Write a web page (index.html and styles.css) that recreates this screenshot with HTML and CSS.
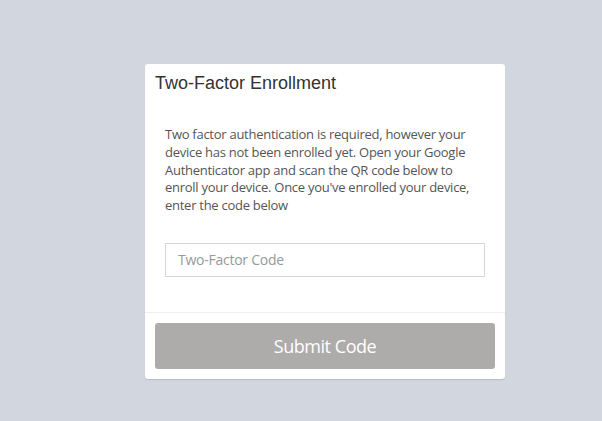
FILE: index.html
```html
<!DOCTYPE html>
<html lang="en">
<head>
<meta charset="utf-8">
<title>Two-Factor Enrollment</title>
<link rel="stylesheet" href="styles.css">
</head>
<body>
<div class="card">
  <div class="card-header">
    <h3 class="card-title">Two-Factor Enrollment</h3>
  </div>
  <div class="card-body">
    <p class="intro">Two factor authentication is required, however your device has not been enrolled yet. Open your Google Authenticator app and scan the QR code below to enroll your device. Once you've enrolled your device, enter the code below</p>
    <input class="code-input" type="text" placeholder="Two-Factor Code">
  </div>
  <div class="card-footer">
    <button class="submit-btn" type="button">Submit Code</button>
  </div>
</div>
</body>
</html>
```
FILE: styles.css
```css
html, body {
  margin: 0;
  padding: 0;
}
body {
  background: #d2d6de;
  min-height: 421px;
  padding: 64px 0 0 145px;
  box-sizing: border-box;
  font-family: "Open Sans", "Noto Sans", sans-serif;
}
.card {
  width: 360px;
  background: #fff;
  border-radius: 3px;
  box-shadow: 0 1px 1px rgba(0, 0, 0, 0.12);
}
.card-header {
  padding: 9px 10px 0;
}
.card-title {
  margin: 0;
  font-family: "Liberation Sans", Arial, sans-serif;
  font-weight: normal;
  font-size: 18px;
  line-height: 20px;
  color: #333;
}
.card-body {
  padding: 33px 20px 35px;
}
.intro {
  margin: 0 0 28px;
  font-size: 13px;
  line-height: 17.8px;
  letter-spacing: -0.27px;
  color: #555;
}
.code-input {
  display: block;
  width: 100%;
  height: 34px;
  box-sizing: border-box;
  border: 1px solid #d2d6de;
  padding: 0 12px;
  font-family: inherit;
  font-size: 14px;
  letter-spacing: -0.25px;
  color: #555;
  outline: none;
}
.code-input::placeholder {
  color: #999;
}
.card-footer {
  border-top: 1px solid #f0f0f0;
  padding: 10px;
}
.submit-btn {
  display: block;
  width: 100%;
  height: 46px;
  border: none;
  border-radius: 3px;
  background: #adacaa;
  color: #fff;
  font-family: inherit;
  font-size: 18px;
  letter-spacing: -0.45px;
}
```
